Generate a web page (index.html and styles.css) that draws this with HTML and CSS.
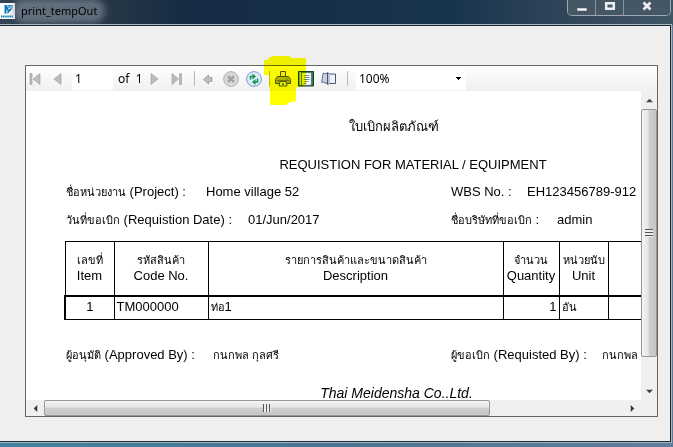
FILE: index.html
```html
<!DOCTYPE html>
<html lang="en">
<head>
<meta charset="utf-8">
<title>print_tempOut</title>
<link rel="stylesheet" href="styles.css">
</head>
<body>
<div class="window">
  <header class="titlebar">
    <svg class="logo" viewBox="0 0 15 16" aria-hidden="true">
      <path fill="#fff" d="M0 0h15v16H0z"/>
      <path fill="#0878bb" d="M4.500 2h2L9 6.500 12.500 2H13l-1 4-4.500 5V7.500L6.500 6v4.500h-2z"/>
      <path fill="#0878bb" d="M7 2h5L9 5.500z"/>
      <path stroke="#fff" stroke-width=".5" d="M7 3l5 1M8 6l4-1"/>
      <path stroke="#0878bb" stroke-width="1.800" stroke-dasharray="1.500 .6" d="M1 13.500h12"/>
    </svg>
    <h1 class="caption">print_tempOut</h1>
    <div class="controls">
      <button class="control" aria-label="Minimize"><svg viewBox="0 0 12 12"><path fill="#f5f5f7" stroke="#4a4f58" stroke-width=".5" d="M1 8h10v3H1z"/></svg></button>
      <button class="control" aria-label="Maximize"><svg viewBox="0 0 12 12"><path fill="none" stroke="#f0f0f3" stroke-width="2.5" d="M2.2 3.2h7.6v5.6H2.2z"/></svg></button>
      <button class="control control-close" aria-label="Close"><svg viewBox="0 0 12 12"><path fill="none" stroke="#f0f0f3" stroke-width="2.6" d="M2.500 2.500l7 7M9.500 2.500l-7 7"/></svg></button>
    </div>
  </header>
  <main class="client">
    <section class="viewer">
      <div class="toolbar">
        <button class="tool" aria-label="First page"><svg viewBox="0 0 16 16"><path fill="#bdbdbd" stroke="#999" stroke-width=".6" d="M4 2.500h2v11H4zM14 2.500v11L7 8z"/></svg></button>
        <button class="tool" aria-label="Previous page"><svg viewBox="0 0 16 16"><path fill="#bdbdbd" stroke="#999" stroke-width=".6" d="M12 2.500v11L5 8z"/></svg></button>
        <input class="page-number" type="text" value="1" aria-label="Current page">
        <span class="page-total">of&nbsp; 1</span>
        <button class="tool" aria-label="Next page"><svg viewBox="0 0 16 16"><path fill="#bdbdbd" stroke="#999" stroke-width=".6" d="M6 2.500v11L13 8z"/></svg></button>
        <button class="tool" aria-label="Last page"><svg viewBox="0 0 16 16"><path fill="#bdbdbd" stroke="#999" stroke-width=".6" d="M4 2.500v11L10.500 8zM11.500 2.500h2v11h-2z"/></svg></button>
        <span class="separator separator-wide"></span>
        <button class="tool" aria-label="Back"><svg viewBox="0 0 16 16"><path fill="#c0c0c0" stroke="#959595" stroke-width=".8" d="M3.500 8.500l5-4.500v2.500H12v4H8.500V13z"/></svg></button>
        <button class="tool" aria-label="Stop"><svg viewBox="0 0 16 16"><circle cx="8" cy="8" r="7.400" fill="#d8d8d8" stroke="#b4b4b4"/><path stroke="#a0a0a0" stroke-width="2.400" d="M5 5.200l6 5.600M11 5.200l-6 5.600"/></svg></button>
        <button class="tool" aria-label="Refresh"><svg viewBox="0 0 16 16"><circle cx="8" cy="8" r="7.400" fill="#dceafa" stroke="#6f9fd2"/><path fill="none" stroke="#16964a" stroke-width="1.500" d="M4.500 8.500V5.500H7M11.500 7.500v3.500H9"/><path fill="#16964a" d="M6.500 2.500l3.500 3-3.500 3zM9.500 8v6L6 11z"/></svg></button>
        <span class="separator"></span>
        <button class="tool" aria-label="Print"><svg viewBox="0 0 16 16"><path fill="#eee" stroke="#555" d="M5.500.500h5V6h-5z"/><path fill="#b4b4b4" stroke="#505050" d="M2.500 5.500h11l2 3v4H.5v-4z"/><path fill="#777" d="M2 9h12v1.500H2z"/><path fill="#eee" stroke="#555" d="M5 10.500h6l1 4.500H4z"/><path fill="#3c9b42" d="M11 7.500h2v1h-2zM7 12h2v2H7z"/></svg></button>
        <button class="tool" aria-label="Print layout"><svg viewBox="0 0 16 16"><path fill="#397651" stroke="#183e38" d="M.5.500h15v14.500H.5z"/><path fill="#c8dfef" d="M1.500 1h1.500v13H1.500z"/><path fill="#fff" stroke="#9ca8ba" stroke-width=".5" d="M4 2h9v12H4z"/><path stroke="#6f86ab" d="M5.500 4.500h6M5.500 6.500h6M5.500 8.500h6M5.500 10.500h5M5.500 12.500h3"/></svg></button>
        <button class="tool" aria-label="Page setup"><svg viewBox="0 0 16 16"><path fill="#c8d3df" stroke="#68768b" d="M.7 11.500L2 2.500h4.500v8l-1.700 2.500-1.300-2z"/><path fill="#edf2fb" stroke="#465572" d="M6.500 1.500l2 1.500h6v9.500h-6l-2 1z"/><path stroke="#a4b3cd" stroke-width="1.500" d="M8 3.500v9"/></svg></button>
        <span class="separator separator-wide"></span>
        <select class="zoom" aria-label="Zoom"><option>100%</option></select>
        <svg class="highlight" viewBox="0 0 42 50" aria-hidden="true"><path fill="#ff0" d="M0 4h4V2l5-2h16l3 2h14v26l-4 3h-6v14l-6 1-4 3H6V32l-1-1V19H0z"/></svg>
      </div>
      <div class="report-area">
        <article class="paper">
          <h2 class="title-thai" lang="th">ใบเบิกผลิตภัณฑ์</h2>
          <h3 class="title">REQUISTION FOR MATERIAL / EQUIPMENT</h3>
          <dl class="details">
            <div class="pair"><dt class="label-project"><span class="thai" lang="th">ชื่อหน่วยงาน</span> (Project) :</dt><dd>Home village 52</dd></div>
            <div class="pair"><dt class="label-wbs">WBS No. :</dt><dd>EH123456789-912</dd></div>
            <div class="pair"><dt class="label-date"><span class="thai" lang="th">วันที่ขอเบิก</span> (Requistion Date) :</dt><dd>01/Jun/2017</dd></div>
            <div class="pair"><dt class="label-company"><span class="thai" lang="th">ชื่อบริษัทที่ขอเบิก</span> :</dt><dd>admin</dd></div>
          </dl>
          <table class="items">
            <colgroup><col class="col-item"><col class="col-code"><col class="col-description"><col class="col-quantity"><col class="col-unit"><col class="col-rest"></colgroup>
            <thead>
              <tr>
                <th><span class="thai" lang="th">เลขที่</span><br>Item</th>
                <th><span class="thai" lang="th">รหัสสินค้า</span><br>Code No.</th>
                <th><span class="thai" lang="th">รายการสินค้าและขนาดสินค้า</span><br>Description</th>
                <th><span class="thai" lang="th">จำนวน</span><br>Quantity</th>
                <th><span class="thai" lang="th">หน่วยนับ</span><br>Unit</th>
                <th></th>
              </tr>
            </thead>
            <tbody>
              <tr><td class="center">1</td><td>TM000000</td><td><span class="thai" lang="th">ท่อ</span>1</td><td class="number">1</td><td><span class="thai" lang="th">อัน</span></td><td></td></tr>
            </tbody>
          </table>
          <dl class="details signatures">
            <div class="pair"><dt class="label-approved"><span class="thai" lang="th">ผู้อนุมัติ</span> (Approved By) :</dt><dd class="thai" lang="th">กนกพล กุลศรี</dd></div>
            <div class="pair"><dt class="label-requested"><span class="thai" lang="th">ผู้ขอเบิก</span> (Requisted By) :</dt><dd class="thai" lang="th">กนกพล กุลศรี</dd></div>
          </dl>
          <p class="company">Thai Meidensha Co..Ltd.</p>
        </article>
        <div class="scroll scroll-vertical">
          <span class="arrow"><svg viewBox="0 0 8 8"><path fill="#444" d="M0 6l4-4 4 4z"/></svg></span>
          <div class="track"><div class="thumb"><span class="grip"></span></div></div>
          <span class="arrow"><svg viewBox="0 0 8 8"><path fill="#444" d="M0 2l4 4 4-4z"/></svg></span>
        </div>
        <div class="scroll scroll-horizontal">
          <span class="arrow"><svg viewBox="0 0 8 8"><path fill="#333" d="M6 0v8L2 4z"/></svg></span>
          <div class="track"><div class="thumb"><span class="grip"></span></div></div>
          <span class="arrow"><svg viewBox="0 0 8 8"><path fill="#333" d="M2 0v8l4-4z"/></svg></span>
        </div>
        <span class="scroll-corner"></span>
      </div>
    </section>
  </main>
</div>
</body>
</html>
```

FILE: styles.css
```css
* { box-sizing: border-box; }
body { margin: 0; }
button { padding: 0; border: 0; background: none; }
h1, h2, h3, p, dl, dd { margin: 0; font-weight: 400; }

.window {
  display: flex;
  flex-direction: column;
  height: 100vh;
  padding: 0 2px 5px 0;
  background: linear-gradient(90deg, #41819f, #4b7594 50%, #607c9b);
  overflow: hidden;
}
.titlebar {
  display: flex;
  align-items: flex-start;
  flex: 0 0 25px;
  margin-right: -2px;
  background: linear-gradient(90deg, #344150 0, #263746 110px, #152b43 190px, #18344d 450px, #34475b 580px, #405665 100%);
}
.logo { flex: none; width: 15px; height: 16px; margin-top: 3px; }
.caption {
  margin: 3px 0 0 2px;
  padding: 0 4px;
  border-radius: 8px;
  background: rgba(130, 143, 157, .6);
  box-shadow: 0 0 6px 4px rgba(130, 143, 157, .6);
  color: #000;
  font: 11px/16px "Noto Sans", sans-serif;
}
.controls {
  display: flex;
  height: 16px;
  margin: 0 2px 0 auto;
  border: 1px solid #9ba8b1;
  border-top: 0;
  border-radius: 0 0 5px 5px;
  overflow: hidden;
}
.control {
  display: grid;
  place-items: center;
  width: 28px;
  padding-bottom: 4px;
  border-right: 1px solid #8796a2;
  background: #455664;
}
.control svg { width: 12px; height: 12px; }
.control-close { width: 46px; border-right: 0; }

.client {
  display: flex;
  flex: 1;
  min-height: 0;
  padding: 39px 12px 24px 25px;
  border: solid #1c2b38;
  border-width: 1px 1px 1px 0;
  outline: 1px solid #a7b5bd;
  background: #efefef;
}
.viewer {
  display: flex;
  flex: 1;
  flex-direction: column;
  min-width: 0;
  border: 1px solid #666;
  background: #fff;
}
.toolbar {
  position: relative;
  display: flex;
  align-items: center;
  gap: 5px;
  flex: 0 0 25px;
  background: linear-gradient(#fff, #f0f0f0);
  font: 12px/16px "Noto Sans", sans-serif;
  color: #000;
}
.tool { flex: none; width: 18px; height: 18px; text-align: left; }
.tool svg { display: block; width: 16px; height: 16px; }
.page-number {
  width: 41px;
  height: 23px;
  padding: 0 3px;
  border: 0;
  background: #fff;
  font: inherit;
}
.page-total { width: 22px; white-space: nowrap; }
.separator { width: 1px; height: 15px; background: #b9b9b9; }
.separator-wide { margin-left: 3px; }
.zoom {
  width: 110px;
  height: 23px;
  margin-left: 3px;
  padding: 0 3px;
  border: 0;
  appearance: none;
  background: linear-gradient(#000, #000) right 5px top 10px / 5px 1px no-repeat,
    linear-gradient(#000, #000) right 6px top 11px / 3px 1px no-repeat,
    linear-gradient(#000, #000) right 7px top 12px / 1px 1px no-repeat, #fff;
  color: #000;
  font: inherit;
}
.highlight {
  position: absolute;
  top: -10px;
  left: 238px;
  width: 42px;
  height: 50px;
  mix-blend-mode: multiply;
  pointer-events: none;
  z-index: 1;
}

.report-area {
  display: grid;
  grid-template: minmax(0, 1fr) 16px / minmax(0, 1fr) 16px;
  flex: 1;
  min-height: 0;
}
.paper {
  padding: 26px 0 0 38px;
  overflow: hidden;
  color: #000;
  font: 13px/16px "Liberation Sans", sans-serif;
  white-space: nowrap;
}
.thai { font-size: 11px; }
.title-thai { width: 660px; font-size: 13px; line-height: 20px; text-align: center; }
.title { width: 698px; margin-top: 20px; font-size: 13px; line-height: 16px; text-align: center; }
.details {
  display: grid;
  grid-template-columns: 385px 300px;
  row-gap: 12px;
  margin: 11px 0 0 2px;
}
.pair { display: flex; }
.pair dd { line-height: 16px; }
.label-project { width: 140px; }
.label-wbs { width: 76px; }
.label-date { width: 182px; }
.label-company { width: 106px; }
.label-approved { width: 147px; }
.label-requested { width: 151px; }

.items {
  width: 698px;
  margin-top: 13px;
  border-collapse: collapse;
  table-layout: fixed;
}
.col-item { width: 49px; }
.col-code { width: 94px; }
.col-description { width: 295px; }
.col-quantity { width: 56px; }
.col-unit { width: 49px; }
.items th, .items td { padding: 0 2px; border: 1px solid #000; }
.items th { height: 54px; font-weight: 400; }
.items tbody { border: 2px solid #000; border-bottom-width: 1px; }
.items td { height: 24px; padding-bottom: 1px; }
.items .center { text-align: center; }
.items .number { text-align: right; }
.signatures { margin-top: 27px; }
.company { width: 665px; margin-top: 21px; font-size: 14px; line-height: 18px; font-style: italic; text-align: center; }

.scroll { display: flex; background: #f0f0f0; }
.scroll-vertical { flex-direction: column; }
.scroll-corner { background: #f0f0f0; }
.arrow { display: grid; flex: 0 0 18px; place-items: center; }
.arrow svg { width: 7px; height: 7px; }
.track { flex: 1; }
.thumb {
  display: grid;
  place-items: center;
  border: 1px solid #979797;
  border-radius: 2px;
}
.scroll-vertical .thumb { height: 91%; background: linear-gradient(90deg, #f5f5f5, #e5e5e5 45%, #cfcfcf 50%, #c5c5c8); }
.scroll-horizontal .thumb { width: 77%; height: 16px; background: linear-gradient(#f5f5f5, #e5e5e5 45%, #cfcfcf 50%, #c5c5c8); }
.grip { width: 8px; height: 8px; }
.scroll-vertical .grip { background: repeating-linear-gradient(#555 0 1px, #eee 1px 3px); }
.scroll-horizontal .grip { background: repeating-linear-gradient(90deg, #555 0 1px, #eee 1px 3px); }
```
